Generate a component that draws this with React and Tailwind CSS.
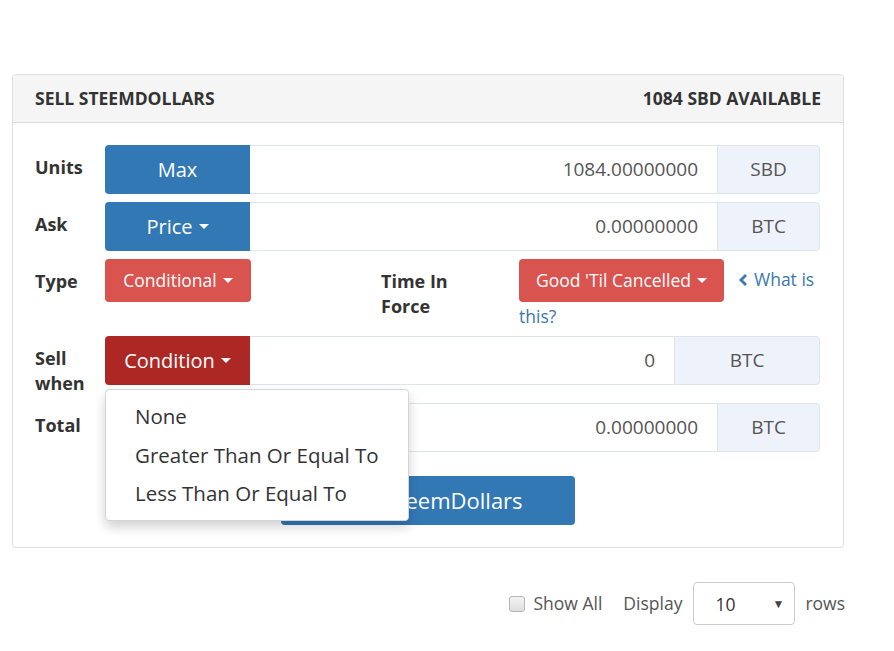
const FONT = { fontFamily: '"Open Sans", "Noto Sans", Arial, sans-serif' };

const Caret = () => (
  <span className="ml-[6px] inline-block h-0 w-0 border-x-[5px] border-t-[5px] border-x-transparent border-t-white align-middle" />
);

const Label = ({ children, className = "" }) => (
  <div className={`shrink-0 pt-[10px] text-[18px] font-bold leading-[25px] text-[#333] ${className}`}>
    {children}
  </div>
);

const ChevronLeft = () => (
  <svg width="11" height="14" viewBox="0 0 11 14" className="mr-[5px] inline-block">
    <path d="M8 2 L3 7 L8 12" fill="none" stroke="#3a78ad" strokeWidth="2.8" />
  </svg>
);

// input group: left button, number field, unit addon
const InputGroup = ({ btn, btnClass, value, unit, unitWidth = "w-[103px]", caret, children }) => (
  <div className="relative flex h-[49px] flex-1">
    <div
      className={`flex w-[145px] shrink-0 items-center justify-center rounded-l-[4px] text-[20px] text-white ${btnClass}`}
    >
      {btn}
      {caret && <Caret />}
    </div>
    <div className="flex flex-1 items-center justify-end border-y border-[#dfe4ea] bg-white pr-[19px] text-[19px] text-[#555]">
      {value}
    </div>
    <div
      className={`flex ${unitWidth} shrink-0 items-center justify-center rounded-r-[4px] border border-[#dfe4ea] bg-[#eef2fa] text-[19px] text-[#555]`}
    >
      {unit}
    </div>
    {children}
  </div>
);

export default function App() {
  return (
    <div className="min-h-screen bg-white pt-[74px]" style={FONT}>
      <div className="ml-[12px] w-[833px]">
        {/* Panel */}
        <div className="w-[832px] rounded-[4px] border border-[#dddddd]">
          <div className="flex h-[48px] items-center justify-between rounded-t-[4px] border-b border-[#dddddd] bg-[#f5f5f5] px-[22px] text-[17.5px] font-bold text-[#333]">
            <span>SELL STEEMDOLLARS</span>
            <span>1084 SBD AVAILABLE</span>
          </div>

          <div className="flex flex-col gap-[8px] pb-[22px] pl-[22px] pr-[23px] pt-[22px]">
            {/* Units */}
            <div className="flex">
              <Label className="w-[70px]">Units</Label>
              <InputGroup btn="Max" btnClass="bg-[#3278b5]" value="1084.00000000" unit="SBD" />
            </div>

            {/* Ask */}
            <div className="flex">
              <Label className="w-[70px]">Ask</Label>
              <InputGroup btn="Price" caret btnClass="bg-[#3278b5]" value="0.00000000" unit="BTC" />
            </div>

            {/* Type */}
            <div className="flex h-[69px]">
              <Label className="w-[70px]">Type</Label>
              <div className="w-[276px] shrink-0">
                <div className="flex h-[43px] w-[146px] items-center justify-center rounded-[4px] bg-[#d9534f] text-[17.5px] text-white">
                  Conditional
                  <Caret />
                </div>
              </div>
              <Label className="w-[138px]">
                Time In
                <br />
                Force
              </Label>
              <div className="w-[301px] text-[17.5px] text-[#3a78ad]">
                <div className="flex items-center">
                  <div className="flex h-[43px] w-[205px] items-center justify-center rounded-[4px] bg-[#d9534f] text-white">
                    Good 'Til Cancelled
                    <Caret />
                  </div>
                  <span className="ml-[14px] flex items-center pb-[2px]">
                    <ChevronLeft />
                    What is
                  </span>
                </div>
                <div className="leading-[28px]">this?</div>
              </div>
            </div>

            {/* Sell when */}
            <div className="flex h-[59px]">
              <Label className="w-[70px]">
                Sell
                <br />
                when
              </Label>
              <div className="flex h-[49px] flex-1">
                <InputGroup
                  btn="Condition"
                  caret
                  btnClass="bg-[#ad2824]"
                  value="0"
                  unit="BTC"
                  unitWidth="w-[146px]"
                >
                  {/* open dropdown */}
                  <div className="absolute left-0 top-[53px] z-10 w-[304px] rounded-[4px] border border-[#d5d5d5] bg-white py-[7px] text-[20.5px] leading-[38.5px] text-[#333] shadow-[0_6px_12px_rgba(0,0,0,0.18)]">
                    <div className="pl-[29px]">None</div>
                    <div className="pl-[29px]">Greater Than Or Equal To</div>
                    <div className="pl-[29px]">Less Than Or Equal To</div>
                  </div>
                </InputGroup>
              </div>
            </div>

            {/* Total */}
            <div className="flex">
              <Label className="w-[70px]">Total</Label>
              <div className="flex h-[49px] flex-1">
                <div className="flex flex-1 items-center justify-end rounded-l-[4px] border border-r-0 border-[#dfe4ea] bg-white pr-[19px] text-[19px] text-[#555]">
                  0.00000000
                </div>
                <div className="flex w-[103px] items-center justify-center rounded-r-[4px] border border-[#dfe4ea] bg-[#eef2fa] text-[19px] text-[#555]">
                  BTC
                </div>
              </div>
            </div>

            {/* Submit */}
            <div className="mt-[16px] flex justify-center">
              <button className="h-[49px] w-[294px] rounded-[4px] bg-[#3278b5] pl-[12px] text-[22px] text-white">
                Sell SteemDollars
              </button>
            </div>
          </div>
        </div>

        {/* Table controls */}
        <div className="mt-[34px] flex items-center justify-end text-[17.5px] text-[#555]">
          <span className="mr-[8px] inline-block h-[16px] w-[16px] rounded-[3px] border border-[#b5b5b5] bg-gradient-to-b from-[#f4f4f4] to-[#dedede]" />
          <span>Show All</span>
          <span className="ml-[21px]">Display</span>
          <div className="ml-[11px] flex h-[43px] w-[102px] items-center justify-between rounded-[4px] border border-[#cccccc] bg-white pl-[21px] pr-[10px] text-[#333]">
            <span className="pt-[2px]">10</span>
            <span className="text-[12px] text-[#444]">▼</span>
          </div>
          <span className="ml-[10px]">rows</span>
        </div>
      </div>
    </div>
  );
}
